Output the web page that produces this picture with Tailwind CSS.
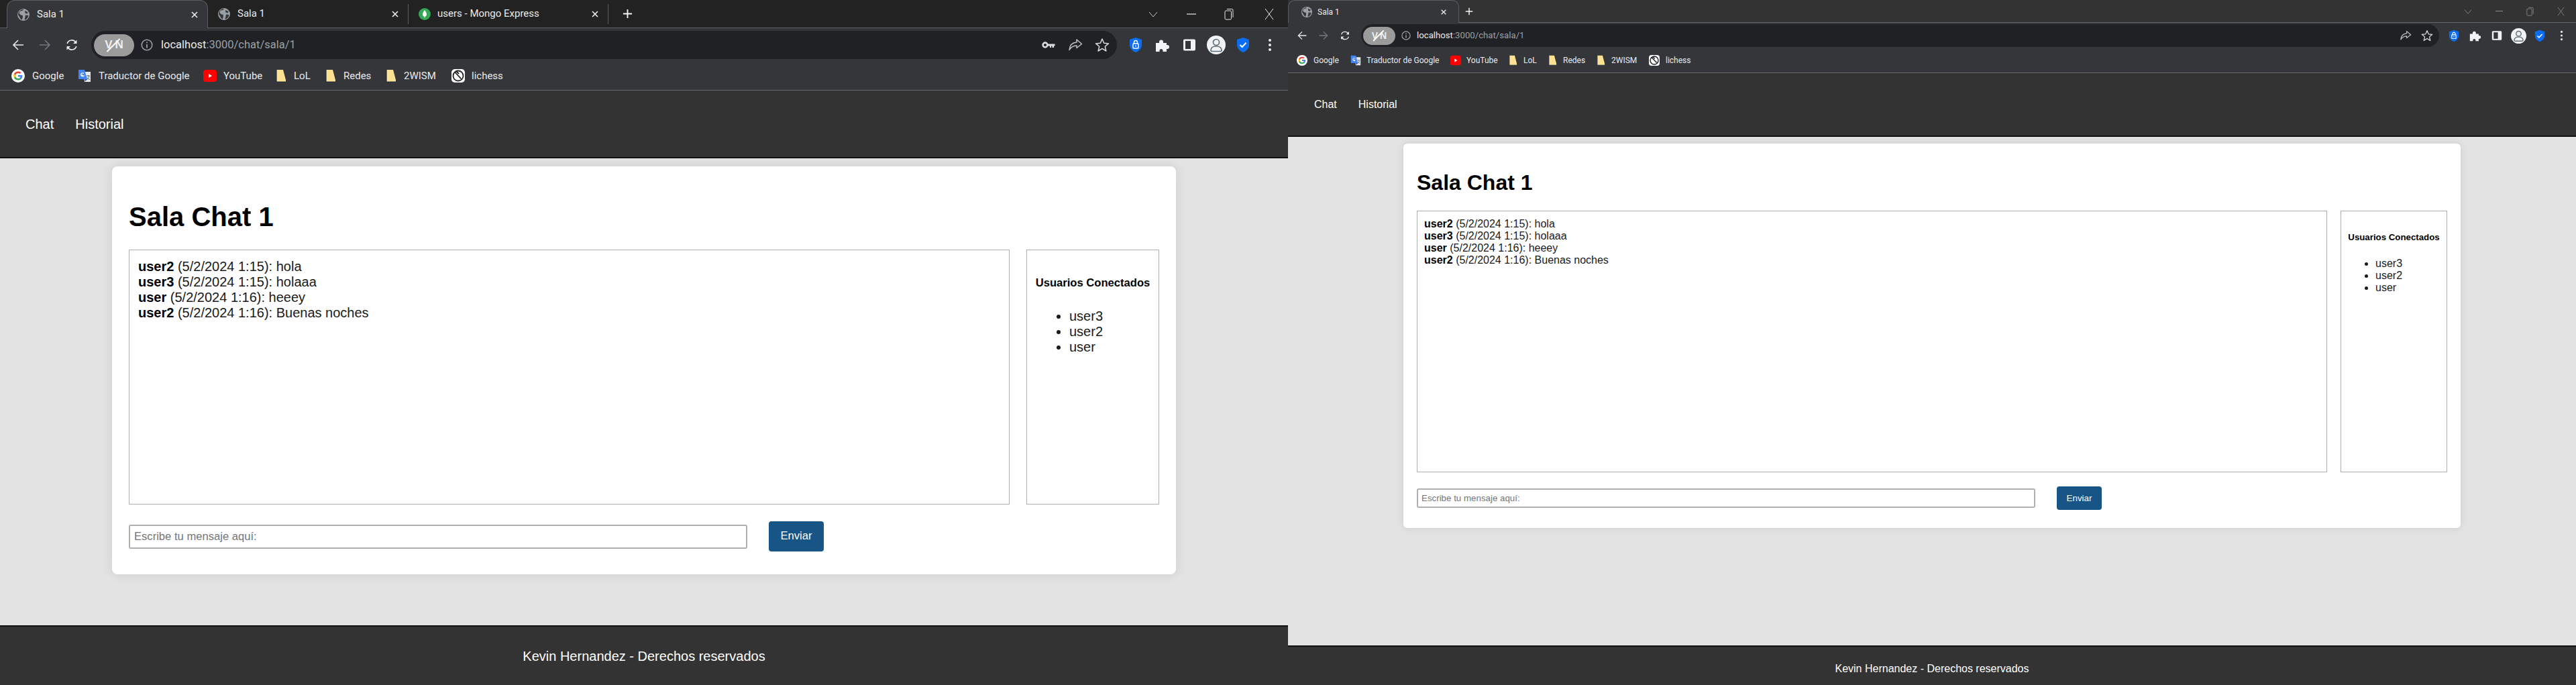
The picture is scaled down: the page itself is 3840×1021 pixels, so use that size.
<!DOCTYPE html>
<html lang="es">
<head>
<meta charset="utf-8">
<title>Sala 1</title>
<script src="https://cdn.jsdelivr.net/npm/@tailwindcss/browser@4"></script>
</head>
<body class="m-0 overflow-hidden bg-[#e3e3e3]">
<svg class="absolute w-0 h-0" aria-hidden="true">
  <symbol id="globe" viewBox="0 0 18 18"><circle cx="9" cy="9" r="9" fill="#9aa0a6"/><path d="M9 1.500 7 3 3.500 3.800 2.500 7 5 9.500 7.500 9.800 8 12 7 16.500 4.500 15 3 12 1 9A8 8 0 0 1 9 1ZM11 3 15.500 5 14.500 7.500 11.500 6.500ZM12 9.500 16.500 10 15 14 12 16.500 10.500 16 11.500 12.500Z" fill="#35363a"/></symbol>
  <symbol id="close" viewBox="0 0 12 12"><path d="M2 2 10 10M10 2 2 10" stroke="#e8eaed" stroke-width="1.700" fill="none"/></symbol>
  <symbol id="mongo" viewBox="0 0 18 18"><circle cx="9" cy="9" r="9" fill="#34a853"/><path d="M9 3C11 5.500 12 7.500 12 9.500 12 11.500 10.500 12.500 9.500 13L9.200 15H8.800L8.500 13C7.500 12.500 6 11.500 6 9.500 6 7.500 7 5.500 9 3Z" fill="#fff"/></symbol>
  <symbol id="plus" viewBox="0 0 16 16"><path d="M8 1V15M1 8H15" stroke="#f1f3f4" stroke-width="2" fill="none"/></symbol>
  <symbol id="chev" viewBox="0 0 14 14"><path d="M1 4 7 11 13 4" stroke="#c4c7c5" stroke-width="1" fill="none"/></symbol>
  <symbol id="min" viewBox="0 0 14 14"><path d="M0 7H14" stroke="currentColor" stroke-width="1.200" fill="none"/></symbol>
  <symbol id="restore" viewBox="0 0 14 18"><rect x="1" y="4" width="9.500" height="13" rx="1.500" stroke="currentColor" fill="none"/><path d="M4 1.500H11.500Q13 1.500 13 3V14" stroke="currentColor" fill="none"/></symbol>
  <symbol id="winx" viewBox="0 0 14 18"><path d="M1 1 13 17M13 1 1 17" stroke="currentColor" stroke-width="1" fill="none"/></symbol>
  <symbol id="back" viewBox="0 0 20 20"><path d="M18 10H3M10 3 3 10 10 17" stroke="currentColor" stroke-width="1.600" fill="none"/></symbol>
  <symbol id="fwd" viewBox="0 0 20 20"><path d="M2 10H17M10 3 17 10 10 17" stroke="currentColor" stroke-width="1.600" fill="none"/></symbol>
  <symbol id="reload" viewBox="0 0 20 20"><path d="M3.200 8A7 7 0 0 1 16 6.500M16.800 12A7 7 0 0 1 4 13.500" stroke="#e8eaed" stroke-width="1.700" fill="none"/><path d="M17.500 2.500V8H12ZM2.500 17.500V12H8Z" fill="#e8eaed"/></symbol>
  <symbol id="info" viewBox="0 0 18 18"><circle cx="9" cy="9" r="7.800" stroke="#9aa0a6" stroke-width="1.600" fill="none"/><path d="M9 8V13.500M9 4.500V6.300" stroke="#9aa0a6" stroke-width="1.800" fill="none"/></symbol>
  <symbol id="key" viewBox="0 0 20 12"><circle cx="5" cy="6" r="3.400" stroke="#dadce0" stroke-width="2.600" fill="none"/><path d="M9 4.500H19.500V7.500H18V10H15.500V7.500H14V10H12V7.500H9Z" fill="#dadce0"/></symbol>
  <symbol id="share" viewBox="0 0 22 20"><path d="M13 2 20.500 8.500 13 14.500V11C8 11 4.500 13 2 17.500 2.500 10.500 6.500 6.500 13 6Z" stroke="#bdc1c6" stroke-width="1.500" stroke-linejoin="round" fill="none"/></symbol>
  <symbol id="star" viewBox="0 0 22 22"><path d="M11 2 13.700 8.300 20.500 8.900 15.300 13.300 16.900 20 11 16.400 5.100 20 6.700 13.300 1.500 8.900 8.300 8.300Z" stroke="#dadce0" stroke-width="1.500" stroke-linejoin="round" fill="none"/></symbol>
  <symbol id="shieldlock" viewBox="0 0 20 24"><path d="M10 1 19 4V12C19 17 15 21 10 23 5 21 1 17 1 12V4Z" fill="#0b6ef2"/><rect x="6" y="10" width="8" height="7" rx="1" stroke="#fff" stroke-width="1.400" fill="none"/><path d="M7.500 10V8A2.500 2.500 0 0 1 12.500 8V10" stroke="#fff" stroke-width="1.400" fill="none"/><circle cx="10" cy="13.500" r="1" fill="#fff"/></symbol>
  <symbol id="puzzle" viewBox="0 0 22 22"><path d="M1 8H6V6.500A3 3 0 0 1 12 6.500V8H17V11H18A3 3 0 0 1 18 17H17V21H11.500V19.500A2.500 2.500 0 0 0 6.500 19.500V21H1Z" fill="#f1f3f4"/></symbol>
  <symbol id="panel" viewBox="0 0 20 20"><path d="M3 1.500H17A2 2 0 0 1 19 3.500V16.500A2 2 0 0 1 17 18.500H3A2 2 0 0 1 1 16.500V3.500A2 2 0 0 1 3 1.500Z" fill="#f1f3f4"/><rect x="4" y="4" width="8" height="12" fill="#35363a"/></symbol>
  <symbol id="avatar" viewBox="0 0 28 28"><circle cx="14" cy="14" r="14" fill="#f1f3f4"/><circle cx="14" cy="10" r="4.500" stroke="#5f6f7a" stroke-width="1.700" fill="none"/><path d="M6 22C6 17.500 9 16 14 16 19 16 22 17.500 22 22 22 23 21 23.500 20 23.500H8C7 23.500 6 23 6 22Z" stroke="#5f6f7a" stroke-width="1.700" fill="none"/></symbol>
  <symbol id="shieldcheck" viewBox="0 0 20 24"><path d="M10 1 19 4V12C19 17 15 21 10 23 5 21 1 17 1 12V4Z" fill="#0b6ef2"/><path d="M5.500 12 8.700 15 14.500 8.800" stroke="#fff" stroke-width="2" fill="none"/></symbol>
  <symbol id="dots" viewBox="0 0 6 20"><circle cx="3" cy="3" r="2" fill="#e8eaed"/><circle cx="3" cy="10" r="2" fill="#e8eaed"/><circle cx="3" cy="17" r="2" fill="#e8eaed"/></symbol>
  <symbol id="google" viewBox="0 0 20 20"><circle cx="10" cy="10" r="10" fill="#fff"/><path d="M16.300 10.200C16.300 9.700 16.250 9.300 16.200 8.900H10V11.400H13.600C13.400 12.200 12.900 12.900 12.200 13.400V15H14.400C15.600 13.900 16.300 12.200 16.300 10.200Z" fill="#4285f4"/><path d="M10 16.500C11.800 16.500 13.300 15.900 14.400 15L12.200 13.400C11.600 13.800 10.900 14 10 14 8.300 14 6.800 12.900 6.300 11.300H4V13C5.100 15.100 7.400 16.500 10 16.500Z" fill="#34a853"/><path d="M6.300 11.300C6 10.500 6 9.500 6.300 8.700V7H4C3.100 8.800 3.100 11.200 4 13Z" fill="#fbbc05"/><path d="M10 6C11 6 11.900 6.300 12.600 7L14.500 5.100C13.300 4 11.800 3.500 10 3.500 7.400 3.500 5.100 4.900 4 7L6.300 8.700C6.800 7.100 8.300 6 10 6Z" fill="#ea4335"/></symbol>
  <symbol id="translate" viewBox="0 0 20 20"><path d="M8 4H19V19H10Z" fill="#e8eaed"/><path d="M1 1H10L14 15H1Z" fill="#4285f4"/><path d="M10 15H14L11 18.500Z" fill="#2a56c6"/><path d="M9 6.500A2.500 2.500 0 1 0 9 10H6.500V8.300" stroke="#fff" stroke-width="1.200" fill="none"/><path d="M13 10H18M15.500 9V10.500M17 10.500C16.500 13 15 15 13 16M14 12.500C15 14 16 15 18 16" stroke="#5f6368" stroke-width="1" fill="none"/></symbol>
  <symbol id="yt" viewBox="0 0 20 20"><rect x="0" y="1" width="20" height="18" rx="4" fill="#f00"/><path d="M8 7 13 10 8 13Z" fill="#fff"/></symbol>
  <symbol id="folder" viewBox="0 0 16 20"><path d="M1 1H11L15 16V19H1Z" fill="#fde293"/><path d="M1 1V19H15" stroke="#1d2b45" stroke-width="1.200" fill="none"/></symbol>
  <symbol id="lichess" viewBox="0 0 20 20"><rect x="0" y="0" width="20" height="20" rx="5" fill="#fff"/><circle cx="10" cy="10" r="7.500" stroke="#222" stroke-width="1.800" fill="none"/><path d="M5 4.500 14.500 14.500M7 3 11 7" stroke="#222" stroke-width="1.800" fill="none"/></symbol>
</svg>

<div class="flex w-[3840px] h-[1021px] font-['Liberation_Sans',Arial,sans-serif]">

  <!-- LEFT WINDOW -->
  <section class="w-[1920px] h-full flex flex-col shrink-0">
    <div class="h-[42px] bg-[#222222] border-b border-[#5c5d60] flex items-stretch pl-[10px] font-['Roboto',sans-serif] text-[15px] text-[#e8eaed]">
      <div class="w-[300px] h-[42px] bg-[#35363a] border border-b-0 border-[#5c5d60] rounded-t-[12px] flex items-center pl-[15px] pr-[13px]">
        <svg class="w-[18px] h-[18px]"><use href="#globe"/></svg>
        <span class="ml-[11px] flex-1">Sala 1</span>
        <svg class="w-[12px] h-[12px]"><use href="#close"/></svg>
      </div>
      <div class="w-[298px] flex items-center pl-[15px] pr-[13px]">
        <svg class="w-[18px] h-[18px]"><use href="#globe"/></svg>
        <span class="ml-[11px] flex-1">Sala 1</span>
        <svg class="w-[12px] h-[12px]"><use href="#close"/></svg>
      </div>
      <div class="w-px h-[30px] self-center bg-[#5c5d60]"></div>
      <div class="w-[297px] flex items-center pl-[15px] pr-[13px]">
        <svg class="w-[18px] h-[18px]"><use href="#mongo"/></svg>
        <span class="ml-[10px] flex-1">users - Mongo Express</span>
        <svg class="w-[12px] h-[12px]"><use href="#close"/></svg>
      </div>
      <div class="w-px h-[30px] self-center bg-[#5c5d60]"></div>
      <div class="w-[56px] flex items-center justify-center"><svg class="w-[15px] h-[15px]"><use href="#plus"/></svg></div>
      <div class="flex-1"></div>
      <div class="flex items-center text-[#e8eaed]">
        <div class="w-[44px] flex justify-center"><svg class="w-[14px] h-[14px]"><use href="#chev"/></svg></div>
        <div class="w-[7px]"></div>
        <div class="w-[56px] flex justify-center"><svg class="w-[14px] h-[14px]"><use href="#min"/></svg></div>
        <div class="w-[56px] flex justify-center"><svg class="w-[14px] h-[18px]"><use href="#restore"/></svg></div>
        <div class="w-[4px]"></div>
        <div class="w-[56px] flex justify-center"><svg class="w-[14px] h-[18px]"><use href="#winx"/></svg></div>
      </div>
    </div>
    <div class="h-[50px] bg-[#35363a] flex items-center pl-[7px] font-['Roboto',sans-serif]">
      <div class="w-[40px] flex justify-center text-[#e8eaed]"><svg class="w-[20px] h-[20px]"><use href="#back"/></svg></div>
      <div class="w-[40px] flex justify-center text-[#74777c]"><svg class="w-[20px] h-[20px]"><use href="#fwd"/></svg></div>
      <div class="w-[40px] flex justify-center"><svg class="w-[20px] h-[20px]"><use href="#reload"/></svg></div>
      <div class="ml-[9px] w-[1529px] h-[42px] bg-[#202124] rounded-full flex items-center">
        <div class="ml-[4px] w-[60px] h-[33px] rounded-full bg-[#9b9b9b] flex items-center justify-center gap-[4px] relative font-['Liberation_Sans',sans-serif] text-[17px] font-bold text-[#efefef]"><span>V</span><span>N</span><span class="absolute left-[28px] top-[3px] w-[2px] h-[27px] bg-white rotate-[45deg]"></span></div>
        <svg class="ml-[10px] w-[18px] h-[18px]"><use href="#info"/></svg>
        <div class="ml-[12px] text-[16.500px] text-[#9aa0a6] flex-1"><span class="text-[#e8eaed]">localhost</span>:3000/chat/sala/1</div>
        <div class="w-[40px] flex justify-center"><svg class="w-[20px] h-[12px]"><use href="#key"/></svg></div>
        <div class="w-[40px] flex justify-center"><svg class="w-[22px] h-[20px]"><use href="#share"/></svg></div>
        <div class="w-[40px] mr-[2px] flex justify-center"><svg class="w-[22px] h-[22px]"><use href="#star"/></svg></div>
      </div>
      <div class="ml-[8px] flex items-center">
        <div class="w-[40px] flex justify-center"><svg class="w-[20px] h-[24px]"><use href="#shieldlock"/></svg></div>
        <div class="w-[40px] flex justify-center"><svg class="w-[22px] h-[22px]"><use href="#puzzle"/></svg></div>
        <div class="w-[40px] flex justify-center"><svg class="w-[20px] h-[20px]"><use href="#panel"/></svg></div>
        <div class="w-[40px] flex justify-center"><svg class="w-[28px] h-[28px]"><use href="#avatar"/></svg></div>
        <div class="w-[40px] flex justify-center"><svg class="w-[20px] h-[24px]"><use href="#shieldcheck"/></svg></div>
        <div class="w-[40px] flex justify-center"><svg class="w-[6px] h-[20px]"><use href="#dots"/></svg></div>
      </div>
    </div>
    <div class="h-[43px] bg-[#35363a] border-b border-[#66676a] flex items-center pl-[17px] font-['Roboto',sans-serif] text-[15px] text-[#e8eaed]">
      <div class="w-[99px] flex items-center gap-[11px]"><svg class="w-[20px] h-[20px]"><use href="#google"/></svg><span>Google</span></div>
      <div class="w-[187px] flex items-center gap-[11px]"><svg class="w-[20px] h-[20px]"><use href="#translate"/></svg><span>Traductor de Google</span></div>
      <div class="w-[106px] flex items-center gap-[10px]"><svg class="w-[20px] h-[20px]"><use href="#yt"/></svg><span>YouTube</span></div>
      <div class="w-[74px] flex items-center gap-[11px] pl-[2px]"><svg class="w-[16px] h-[20px]"><use href="#folder"/></svg><span>LoL</span></div>
      <div class="w-[90px] flex items-center gap-[11px] pl-[2px]"><svg class="w-[16px] h-[20px]"><use href="#folder"/></svg><span>Redes</span></div>
      <div class="w-[100px] flex items-center gap-[11px] pl-[2px]"><svg class="w-[16px] h-[20px]"><use href="#folder"/></svg><span>2WISM</span></div>
      <div class="flex items-center gap-[10px]"><svg class="w-[20px] h-[20px]"><use href="#lichess"/></svg><span>lichess</span></div>
    </div>
    <nav class="h-[101px] bg-[#333333] border-b-2 border-[#111111] flex items-center gap-[32px] pl-[38px] text-[20px] text-white">
      <span>Chat</span><span>Historial</span>
    </nav>
    <main class="flex-1 pt-[12px]">
      <div class="w-[1586px] mx-auto bg-white rounded-[8px] shadow-[0_0_15px_rgba(0,0,0,0.1)] pt-[52px] px-[25px] pb-[34px]">
        <h1 class="text-[40px] leading-[46px] font-bold text-black mb-[26px]">Sala Chat 1</h1>
        <div class="flex gap-[25px] h-[380px]">
          <div class="flex-1 border border-[#adadad] pt-[13px] pl-[13px] text-[20px] leading-[23px] text-[#1a1a1a]">
            <p><b class="text-black">user2</b> (5/2/2024 1:15): hola</p>
            <p><b class="text-black">user3</b> (5/2/2024 1:15): holaaa</p>
            <p><b class="text-black">user</b> (5/2/2024 1:16): heeey</p>
            <p><b class="text-black">user2</b> (5/2/2024 1:16): Buenas noches</p>
          </div>
          <aside class="w-[198px] border border-[#adadad] pt-[39px]">
            <h3 class="text-[16.600px] leading-[20px] font-bold text-center text-black">Usuarios Conectados</h3>
            <ul class="list-disc mt-[28px] pl-[63px] text-[20px] leading-[23px] text-[#1a1a1a]">
              <li>user3</li><li>user2</li><li>user</li>
            </ul>
          </aside>
        </div>
        <div class="mt-[25px] flex items-center gap-[32px]">
          <input class="w-[922px] h-[36px] border-2 border-[#b0aeae] rounded-[3px] pl-[6px] text-[16.600px] placeholder:text-[#757575]" placeholder="Escribe tu mensaje aquí:">
          <button class="w-[82px] h-[45px] bg-[#175587] rounded-[4px] text-white text-[16.600px]">Enviar</button>
        </div>
      </div>
    </main>
    <footer class="h-[89px] bg-[#333333] border-t-2 border-[#111111] flex items-center justify-center text-[20px] text-white">Kevin Hernandez - Derechos reservados</footer>
  </section>

  <!-- RIGHT WINDOW -->
  <section class="w-[1920px] h-full flex flex-col shrink-0">
    <div class="h-[34px] bg-[#333333] border-b border-[#66676a] flex items-stretch font-['Roboto',sans-serif] text-[12px] text-[#e8eaed]">
      <div class="w-[255px] h-[34px] bg-[#35363a] border border-b-0 border-[#5c5d60] rounded-t-[10px] flex items-center pl-[19px] pr-[17px]">
        <svg class="w-[16px] h-[16px]"><use href="#globe"/></svg>
        <span class="ml-[8px] flex-1">Sala 1</span>
        <svg class="w-[10px] h-[10px]"><use href="#close"/></svg>
      </div>
      <div class="w-[30px] flex items-center justify-center"><svg class="w-[12px] h-[12px]"><use href="#plus"/></svg></div>
      <div class="flex-1"></div>
      <div class="flex items-center text-[#8f9194]">
        <div class="w-[46px] flex justify-center"><svg class="w-[12px] h-[12px] opacity-60"><use href="#chev"/></svg></div>
        <div class="w-[46px] flex justify-center"><svg class="w-[11px] h-[11px]"><use href="#min"/></svg></div>
        <div class="w-[46px] flex justify-center"><svg class="w-[11px] h-[14px]"><use href="#restore"/></svg></div>
        <div class="w-[46px] flex justify-center"><svg class="w-[11px] h-[14px]"><use href="#winx"/></svg></div>
      </div>
    </div>
    <div class="h-[38px] bg-[#35363a] flex items-center pl-[5px] font-['Roboto',sans-serif]">
      <div class="w-[32px] flex justify-center text-[#e8eaed]"><svg class="w-[16px] h-[16px]"><use href="#back"/></svg></div>
      <div class="w-[32px] flex justify-center text-[#74777c]"><svg class="w-[16px] h-[16px]"><use href="#fwd"/></svg></div>
      <div class="w-[32px] flex justify-center"><svg class="w-[16px] h-[16px]"><use href="#reload"/></svg></div>
      <div class="ml-[8px] w-[1607px] h-[34px] bg-[#202124] rounded-full flex items-center">
        <div class="ml-[3px] w-[48px] h-[27px] rounded-full bg-[#9b9b9b] flex items-center justify-center gap-[3px] relative font-['Liberation_Sans',sans-serif] text-[14px] font-bold text-[#efefef]"><span>V</span><span>N</span><span class="absolute left-[22px] top-[2.500px] w-[1.500px] h-[22px] bg-white rotate-[45deg]"></span></div>
        <svg class="ml-[9px] w-[14px] h-[14px]"><use href="#info"/></svg>
        <div class="ml-[9px] text-[13.200px] text-[#9aa0a6] flex-1"><span class="text-[#e8eaed]">localhost</span>:3000/chat/sala/1</div>
        <div class="w-[32px] flex justify-center"><svg class="w-[18px] h-[16px]"><use href="#share"/></svg></div>
        <div class="w-[32px] mr-[2px] flex justify-center"><svg class="w-[18px] h-[18px]"><use href="#star"/></svg></div>
      </div>
      <div class="ml-[6px] flex items-center">
        <div class="w-[32px] flex justify-center"><svg class="w-[16px] h-[19px]"><use href="#shieldlock"/></svg></div>
        <div class="w-[32px] flex justify-center"><svg class="w-[18px] h-[18px]"><use href="#puzzle"/></svg></div>
        <div class="w-[32px] flex justify-center"><svg class="w-[16px] h-[16px]"><use href="#panel"/></svg></div>
        <div class="w-[32px] flex justify-center"><svg class="w-[23px] h-[23px]"><use href="#avatar"/></svg></div>
        <div class="w-[32px] flex justify-center"><svg class="w-[16px] h-[19px]"><use href="#shieldcheck"/></svg></div>
        <div class="w-[32px] flex justify-center"><svg class="w-[5px] h-[16px]"><use href="#dots"/></svg></div>
      </div>
    </div>
    <div class="h-[37px] bg-[#35363a] border-b border-[#66676a] flex items-center pl-[13px] font-['Roboto',sans-serif] text-[12px] text-[#e8eaed]">
      <div class="w-[80px] flex items-center gap-[9px]"><svg class="w-[16px] h-[16px]"><use href="#google"/></svg><span>Google</span></div>
      <div class="w-[149px] flex items-center gap-[8px]"><svg class="w-[16px] h-[16px]"><use href="#translate"/></svg><span>Traductor de Google</span></div>
      <div class="w-[86px] flex items-center gap-[8px]"><svg class="w-[16px] h-[16px]"><use href="#yt"/></svg><span>YouTube</span></div>
      <div class="w-[59px] flex items-center gap-[9px] pl-[1px]"><svg class="w-[13px] h-[16px]"><use href="#folder"/></svg><span>LoL</span></div>
      <div class="w-[72px] flex items-center gap-[9px] pl-[1px]"><svg class="w-[13px] h-[16px]"><use href="#folder"/></svg><span>Redes</span></div>
      <div class="w-[79px] flex items-center gap-[9px] pl-[1px]"><svg class="w-[13px] h-[16px]"><use href="#folder"/></svg><span>2WISM</span></div>
      <div class="flex items-center gap-[9px]"><svg class="w-[16px] h-[16px]"><use href="#lichess"/></svg><span>lichess</span></div>
    </div>
    <nav class="h-[95px] bg-[#333333] border-b-2 border-[#111111] flex items-center gap-[32px] pl-[39px] text-[16px] text-white">
      <span>Chat</span><span>Historial</span>
    </nav>
    <main class="flex-1 pt-[10px]">
      <div class="w-[1576px] mx-auto bg-white rounded-[6px] shadow-[0_0_12px_rgba(0,0,0,0.1)] pt-[40px] px-[20px] pb-[27px]">
        <h1 class="text-[32px] leading-[37px] font-bold text-black mb-[23px]">Sala Chat 1</h1>
        <div class="flex gap-[20px] h-[390px]">
          <div class="flex-1 border border-[#adadad] pt-[10px] pl-[10px] text-[16px] leading-[18px] text-[#1a1a1a]">
            <p><b class="text-black">user2</b> (5/2/2024 1:15): hola</p>
            <p><b class="text-black">user3</b> (5/2/2024 1:15): holaaa</p>
            <p><b class="text-black">user</b> (5/2/2024 1:16): heeey</p>
            <p><b class="text-black">user2</b> (5/2/2024 1:16): Buenas noches</p>
          </div>
          <aside class="w-[159px] border border-[#adadad] pt-[31px]">
            <h3 class="text-[13.280px] leading-[16px] font-bold text-center text-black">Usuarios Conectados</h3>
            <ul class="list-disc mt-[22px] pl-[51px] text-[16px] leading-[18px] text-[#1a1a1a]">
              <li>user3</li><li>user2</li><li>user</li>
            </ul>
          </aside>
        </div>
        <div class="mt-[21px] flex items-center gap-[32px]">
          <input class="w-[922px] h-[29px] border-2 border-[#b0aeae] rounded-[3px] pl-[5px] text-[13.333px] placeholder:text-[#757575]" placeholder="Escribe tu mensaje aquí:">
          <button class="w-[67px] h-[35px] bg-[#175587] rounded-[4px] text-white text-[13.333px]">Enviar</button>
        </div>
      </div>
    </main>
    <footer class="h-[59px] bg-[#333333] border-t-2 border-[#111111] pt-[8px] flex items-center justify-center text-[16px] text-white">Kevin Hernandez - Derechos reservados</footer>
  </section>
</div>
</body>
</html>
